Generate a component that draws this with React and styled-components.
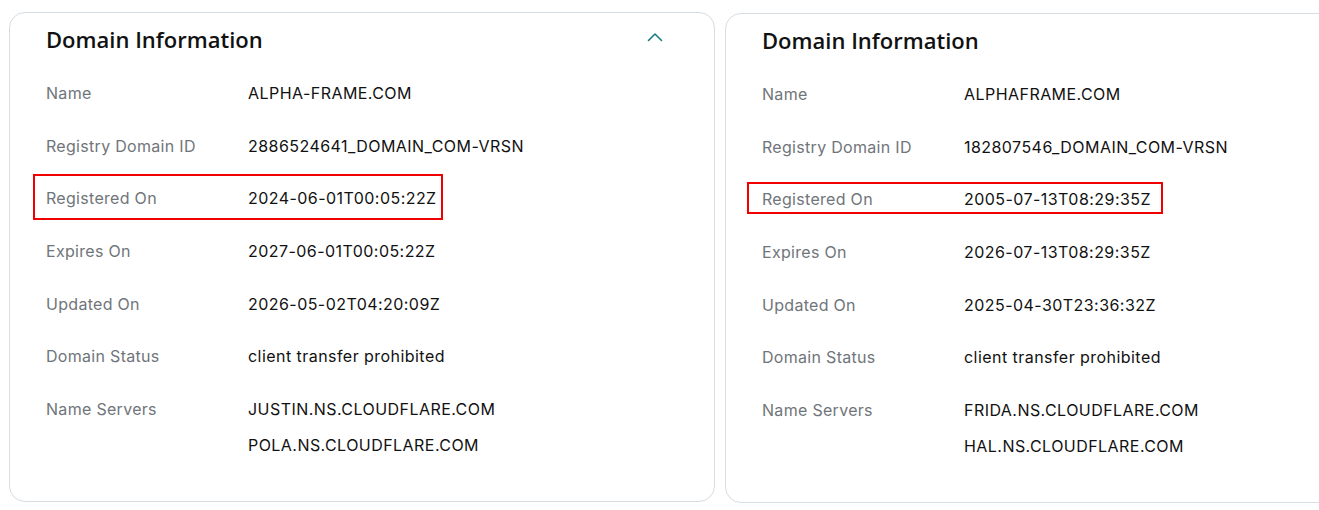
import React from "react";
import styled, { createGlobalStyle } from "styled-components";

const Global = createGlobalStyle`
  html, body { margin: 0; padding: 0; background: #ffffff; overflow: hidden; }
  body { font-family: Inter, "Open Sans", "Liberation Sans", Arial, sans-serif; }
`;

const Page = styled.div`
  display: flex;
  gap: 10px;
  padding: 12px 0 0 9px;
  width: max-content;
  align-items: flex-start;
`;

const Card = styled.section`
  position: relative;
  box-sizing: border-box;
  width: 706px;
  height: 490px;
  margin-top: ${(p) => p.$offset || 0}px;
  border: 1px solid #d6dde3;
  border-radius: 16px;
  background: #fff;
  padding: 12px 36px 29px 36px;
`;

const Header = styled.div`
  display: flex;
  align-items: center;
  justify-content: space-between;
  height: 28px;
`;

const Title = styled.h2`
  margin: 0;
  font-family: "Open Sans", "Liberation Sans", Arial, sans-serif;
  font-size: 22px;
  line-height: 28px;
  font-weight: 600;
  color: #111111;
`;

const Toggle = styled.button`
  border: 0;
  background: none;
  padding: 0;
  margin-right: 15px;
  margin-top: -4px;
  width: 16px;
  height: 10px;
  display: flex;
  align-items: center;
  justify-content: center;
  cursor: pointer;
`;

const List = styled.div`
  margin-top: 13.7px;
  display: flex;
  flex-direction: column;
`;

const Row = styled.div`
  position: relative;
  display: grid;
  grid-template-columns: 202px 1fr;
  padding: 14.33px 0;
  font-size: 16px;
  line-height: 24px;
  letter-spacing: 0.45px;
`;

const Label = styled.div`
  color: #70757a;
  letter-spacing: 0.3px;
`;

const Values = styled.div`
  display: flex;
  flex-direction: column;
  gap: 12px;
  color: #111111;
`;

const Highlight = styled.div`
  position: absolute;
  box-sizing: border-box;
  border: 2px solid #f00000;
  pointer-events: none;
`;

const Chevron = () => (
  <svg width="16" height="10" viewBox="0 0 16 10" fill="none">
    <polyline points="1.5,8.5 8,2 14.5,8.5" stroke="#1b7d84" strokeWidth="1.6" strokeLinecap="round" strokeLinejoin="round" />
  </svg>
);

const DomainCard = ({ data, collapsible, offset, box }) => (
  <Card $offset={offset}>
    <Header>
      <Title>Domain Information</Title>
      {collapsible && (
        <Toggle aria-label="Collapse">
          <Chevron />
        </Toggle>
      )}
    </Header>
    <List>
      {data.map((r) => (
        <Row key={r.label}>
          <Label>{r.label}</Label>
          <Values>
            {r.values.map((v) => (
              <div key={v}>{v}</div>
            ))}
          </Values>
          {r.highlight && (
            <Highlight
              style={{ top: box.top, left: box.left, width: box.width, height: box.height }}
            />
          )}
        </Row>
      ))}
    </List>
  </Card>
);

const left = [
  { label: "Name", values: ["ALPHA-FRAME.COM"] },
  { label: "Registry Domain ID", values: ["2886524641_DOMAIN_COM-VRSN"] },
  { label: "Registered On", values: ["2024-06-01T00:05:22Z"], highlight: true },
  { label: "Expires On", values: ["2027-06-01T00:05:22Z"] },
  { label: "Updated On", values: ["2026-05-02T04:20:09Z"] },
  { label: "Domain Status", values: ["client transfer prohibited"] },
  { label: "Name Servers", values: ["JUSTIN.NS.CLOUDFLARE.COM", "POLA.NS.CLOUDFLARE.COM"] },
];

const right = [
  { label: "Name", values: ["ALPHAFRAME.COM"] },
  { label: "Registry Domain ID", values: ["182807546_DOMAIN_COM-VRSN"] },
  { label: "Registered On", values: ["2005-07-13T08:29:35Z"], highlight: true },
  { label: "Expires On", values: ["2026-07-13T08:29:35Z"] },
  { label: "Updated On", values: ["2025-04-30T23:36:32Z"] },
  { label: "Domain Status", values: ["client transfer prohibited"] },
  { label: "Name Servers", values: ["FRIDA.NS.CLOUDFLARE.COM", "HAL.NS.CLOUDFLARE.COM"] },
];

export default function App() {
  return (
    <>
      <Global />
      <Page>
        <DomainCard
          data={left}
          collapsible
          offset={0}
          box={{ top: 2, left: -13, width: 410, height: 46 }}
        />
        <DomainCard
          data={right}
          offset={1}
          box={{ top: 9, left: -15, width: 416, height: 32 }}
        />
      </Page>
    </>
  );
}
